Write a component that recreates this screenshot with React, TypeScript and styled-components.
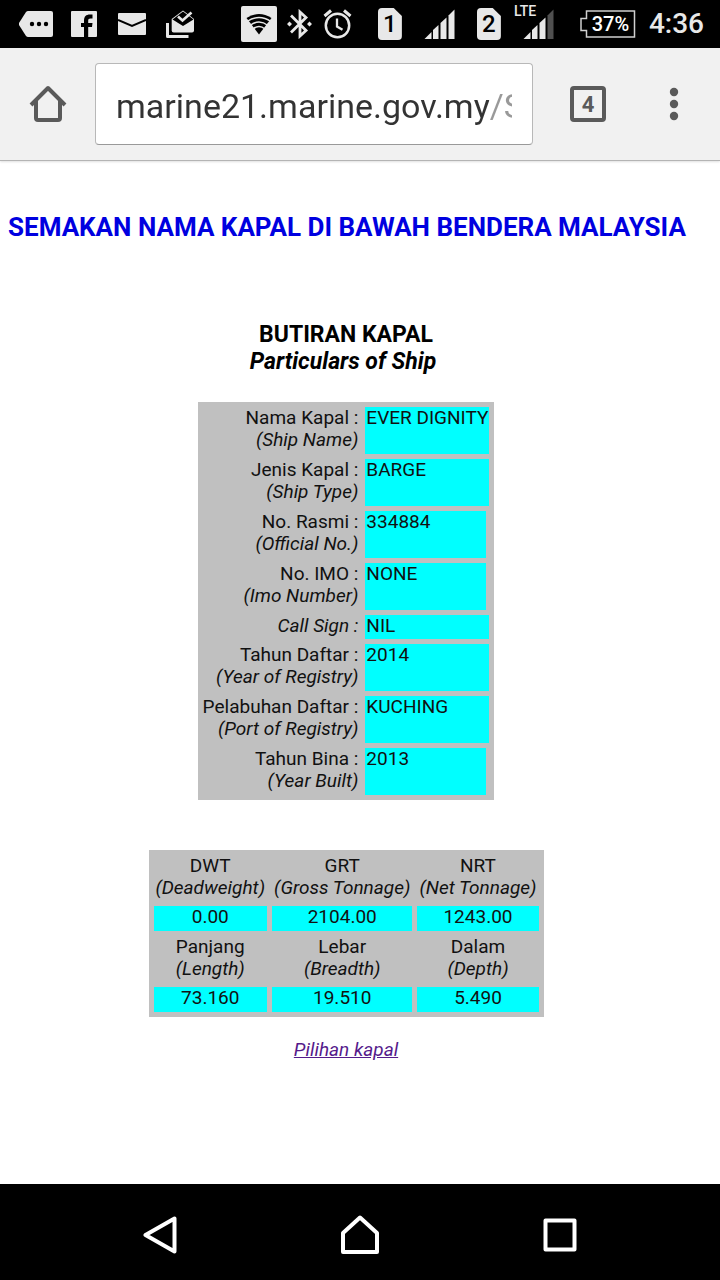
import React from 'react';
import styled, { createGlobalStyle } from 'styled-components';

const GlobalStyle = createGlobalStyle`
  *, *::before, *::after { box-sizing: border-box; }
  body { margin: 0; background: #fff; color: #111; font-family: Roboto, "Liberation Sans", sans-serif; }
  button { border: 0; padding: 0; margin: 0; background: none; font: inherit; cursor: pointer; }
  svg { display: block; flex: none; }
`;

const Screen = styled.div`
  display: flex;
  flex-direction: column;
  min-height: 100vh;
`;

/* ---------- status bar ---------- */

const StatusBar = styled.header`
  display: flex;
  align-items: center;
  justify-content: space-between;
  height: 48px;
  padding: 0 16px 0 12px;
  background: #000;
  color: #e8e8e8;
`;

const Notifications = styled.div`
  display: flex;
`;

const NotificationSlot = styled.span`
  display: flex;
  align-items: center;
  justify-content: center;
  width: 48px;
  height: 48px;
`;

const SystemTray = styled.div`
  display: flex;
  align-items: center;
  gap: 26px;
`;

const TrayGroup = styled.div<{ $gap: number }>`
  display: flex;
  align-items: center;
  gap: ${(p) => p.$gap}px;
`;

const SimBadge = styled.span`
  display: flex;
  align-items: center;
  justify-content: center;
  width: 24px;
  height: 32px;
  border-radius: 4px;
  background: #e8e8e8;
  clip-path: polygon(0 0, 66% 0, 100% 25%, 100% 100%, 0 100%);
  color: #000;
  font-size: 24px;
  font-weight: 500;
  line-height: 34px;
`;

const NetworkSignal = styled.span`
  position: relative;
  display: flex;
  justify-content: flex-end;
  width: 40px;
`;

const NetworkType = styled.span`
  position: absolute;
  top: -6px;
  left: 0;
  font-size: 14px;
  font-weight: 500;
  line-height: 16px;
`;

const Battery = styled.span`
  position: relative;
  display: flex;
  align-items: center;
  justify-content: center;
  width: 56px;
  height: 28px;
  padding-left: 5px;
  color: #fff;
  font-size: 20px;
  font-weight: 500;
`;

const BatteryOutline = styled.svg`
  position: absolute;
  inset: 0;
`;

const Clock = styled.time`
  font-size: 28px;
  font-weight: 500;
  line-height: 32px;
`;

/* ---------- browser toolbar ---------- */

const Toolbar = styled.nav`
  display: flex;
  align-items: center;
  height: 113px;
  padding-right: 15px;
  border-bottom: 1px solid #b4b4b4;
  background: #f1f1f1;
  box-shadow: 0 1px 2px rgba(0, 0, 0, 0.12);
`;

const ToolButton = styled.button<{ $width: number }>`
  display: flex;
  flex: none;
  align-items: center;
  justify-content: center;
  width: ${(p) => p.$width}px;
  height: 96px;
  color: #5a5a5a;
`;

const AddressBox = styled.label`
  display: flex;
  flex: 1;
  align-items: center;
  min-width: 0;
  height: 82px;
  padding: 4px 20px 0;
  border: 1px solid #b8b8b8;
  border-bottom-color: #999;
  border-radius: 4px;
  background: #fff;
`;

const AddressInput = styled.input`
  width: 100%;
  min-width: 0;
  height: 48px;
  padding: 0;
  border: 0;
  outline: 0;
  background: linear-gradient(90deg, #333 373px, #999 373px);
  background-clip: text;
  -webkit-background-clip: text;
  color: transparent;
  font-family: inherit;
  font-size: 34px;
`;

const TabCount = styled.span`
  display: flex;
  align-items: center;
  justify-content: center;
  width: 36px;
  height: 36px;
  border: 4px solid #5a5a5a;
  border-radius: 4px;
  font-size: 22px;
  font-weight: 700;
`;

/* ---------- page ---------- */

const Page = styled.main`
  display: flex;
  flex: 1;
  flex-direction: column;
  align-items: center;
  padding: 50px 36px 40px 8px;
`;

const Title = styled.h1`
  align-self: stretch;
  margin: 0;
  color: #0000e0;
  font-size: 26px;
  font-weight: 700;
  line-height: 32px;
  white-space: nowrap;
`;

const Heading = styled.h2`
  margin: 78px 0 27px;
  color: #000;
  font-size: 23px;
  font-weight: 700;
  line-height: 27px;
  text-align: center;
`;

const Translation = styled.em`
  display: block;
  padding-right: 6px;
`;

const DataTable = styled.table`
  border-collapse: separate;
  border-spacing: 5px;
  background: #c0c0c0;
  font-size: 19px;
  line-height: 22px;
  white-space: nowrap;

  th, td { padding: 0; font-weight: 400; vertical-align: top; }
`;

const ParticularsTable = styled(DataTable)`
  width: 296px;
`;

const TonnageTable = styled(DataTable)`
  width: 395px;
  margin-top: 50px;
  text-align: center;
`;

const RowLabel = styled.div<{ $compact?: boolean }>`
  padding: 0 2px ${(p) => (p.$compact ? 1 : 3)}px 0;
  text-align: right;
`;

const Value = styled.div<{ $compact?: boolean; $narrow?: boolean }>`
  min-width: 121px;
  min-height: ${(p) => (p.$compact ? 24 : 47)}px;
  margin-right: ${(p) => (p.$narrow ? 3 : 0)}px;
  padding: 0 1px;
  background: #00ffff;
`;

const ColumnLabel = styled.div`
  padding: 0 1px 2px;
`;

const Figure = styled.div`
  padding: 0 1px 3px;
  background: #00ffff;
`;

const BackLink = styled.a`
  margin-top: 22px;
  color: #551a8b;
  font-size: 19px;
  font-style: italic;
  line-height: 22px;
  text-decoration: underline;
`;

/* ---------- system navigation ---------- */

const SystemNav = styled.footer`
  display: grid;
  grid-template-columns: repeat(3, 1fr);
  height: 96px;
  padding: 6px 60px 0;
  background: #000;
`;

const NavButton = styled.button`
  display: flex;
  align-items: center;
  justify-content: center;
`;

const light = '#e8e8e8';

const MoreIcon = () => (
  <svg width="34" height="26" viewBox="0 0 34 26" aria-hidden="true">
    <path d="M9 0H32Q34 0 34 2V24Q34 26 32 26H9Q8 26 7 25L0 14V12L7 1Q8 0 9 0Z" fill={light} />
    <g fill="#000"><circle cx="13" cy="13" r="2.2" /><circle cx="20" cy="13" r="2.2" /><circle cx="27" cy="13" r="2.2" /></g>
  </svg>
);

const FacebookIcon = () => (
  <svg width="26" height="26" viewBox="0 0 26 26" aria-hidden="true">
    <rect width="26" height="26" rx="1" fill={light} />
    <path d="M13 26V16H10V12H13V9.500C13 5.500 15 3.500 19 3.500H21.500V7.500H19.500C17.800 7.500 17.200 8.200 17.200 9.600V12H21.500L21 16H17.200V26Z" fill="#000" />
  </svg>
);

const MailIcon = () => (
  <svg width="28" height="22" viewBox="0 0 28 22" aria-hidden="true">
    <rect width="28" height="22" rx="1" fill={light} />
    <path d="M0 7L14 13L28 7" fill="none" stroke="#000" strokeWidth="2" />
  </svg>
);

const InboxIcon = () => (
  <svg width="30" height="28" viewBox="0 0 30 28" aria-hidden="true">
    <path d="M2.500 13V26.500H23.500" fill="none" stroke={light} strokeWidth="3" strokeLinejoin="round" />
    <path d="M6.700 9L18 0.500L29 9V20.500Q29 22.500 27 22.500H8.700Q6.700 22.500 6.700 20.500Z" fill={light} />
    <path d="M7.500 9.500L18 1.500L28.500 9.500L18 16Z" fill="#000" />
    <path d="M13 6.500L17.500 10.500L26.500 2.500" fill="none" stroke={light} strokeWidth="2.600" />
  </svg>
);

const WifiIcon = () => (
  <svg width="36" height="36" viewBox="0 0 36 36" aria-hidden="true">
    <rect width="36" height="36" rx="2" fill={light} />
    <path d="M5.500 12Q18 4 30.500 12L18 28.500Z" fill="#000" />
    <g fill="none" stroke={light} strokeWidth="1.500">
      <path d="M6 15.500Q18 7.500 30 15.500" /><path d="M9 19.500Q18 12.500 27 19.500" /><path d="M12 23Q18 18 24 23" />
    </g>
  </svg>
);

const BluetoothIcon = () => (
  <svg width="26" height="30" viewBox="0 0 26 30" aria-hidden="true">
    <path d="M4 6.500L19 21.500L13 27V3L19 8.500L4 23.500" fill="none" stroke={light} strokeWidth="2.800" />
    <path d="M2.500 12.500L5 15L2.500 17.500L0 15ZM22.500 12.500L25 15L22.500 17.500L20 15Z" fill={light} />
  </svg>
);

const AlarmIcon = () => (
  <svg width="29" height="30" viewBox="0 0 29 30" aria-hidden="true">
    <g fill="none" stroke={light} strokeWidth="2.500">
      <circle cx="14.500" cy="16.500" r="11.700" />
      <path d="M1.500 7L8 1.500M27.500 7L21 1.500" strokeWidth="3" />
      <path d="M14 9.500V17.500L19.500 20.800" strokeWidth="2.300" />
    </g>
  </svg>
);

const SignalIcon = ({ weak = false }: { weak?: boolean }) => (
  <svg width="31" height="30" viewBox="0 0 31 30" aria-hidden="true">
    <g fill={light}>
      <path d="M0.500 30L7.500 23V30Z" /><path d="M9 21L14.500 16V30H9Z" /><path d="M16.500 14L22.500 8.500V30H16.500Z" />
    </g>
    <path d="M24.500 6.500L30.500 0.500V30H24.500Z" fill={weak ? '#505050' : light} />
  </svg>
);

const HomeIcon = () => (
  <svg width="38" height="38" viewBox="0 0 38 38" aria-hidden="true">
    <path d="M2 20L19 3L36 20M7 16V33Q7 35 9 35H29Q31 35 31 33V16" fill="none" stroke="currentColor" strokeWidth="4" strokeLinejoin="round" />
  </svg>
);

const MenuIcon = () => (
  <svg width="10" height="34" viewBox="0 0 10 34" fill="currentColor" aria-hidden="true">
    <circle cx="5" cy="5" r="4.200" /><circle cx="5" cy="17" r="4.200" /><circle cx="5" cy="29" r="4.200" />
  </svg>
);

type Particular = { label: string; translation?: string; value: string; narrow?: boolean };

const particulars: Particular[] = [
  { label: 'Nama Kapal :', translation: '(Ship Name)', value: 'EVER DIGNITY' },
  { label: 'Jenis Kapal :', translation: '(Ship Type)', value: 'BARGE' },
  { label: 'No. Rasmi :', translation: '(Official No.)', value: '334884', narrow: true },
  { label: 'No. IMO :', translation: '(Imo Number)', value: 'NONE', narrow: true },
  { label: 'Call Sign :', value: 'NIL' },
  { label: 'Tahun Daftar :', translation: '(Year of Registry)', value: '2014' },
  { label: 'Pelabuhan Daftar :', translation: '(Port of Registry)', value: 'KUCHING' },
  { label: 'Tahun Bina :', translation: '(Year Built)', value: '2013', narrow: true },
];

const measurements = [
  [
    { label: 'DWT', translation: '(Deadweight)', value: '0.00' },
    { label: 'GRT', translation: '(Gross Tonnage)', value: '2104.00' },
    { label: 'NRT', translation: '(Net Tonnage)', value: '1243.00' },
  ],
  [
    { label: 'Panjang', translation: '(Length)', value: '73.160' },
    { label: 'Lebar', translation: '(Breadth)', value: '19.510' },
    { label: 'Dalam', translation: '(Depth)', value: '5.490' },
  ],
];

export default function App() {
  return (
    <Screen>
      <GlobalStyle />
      <StatusBar>
        <Notifications>
          <NotificationSlot><MoreIcon /></NotificationSlot>
          <NotificationSlot><FacebookIcon /></NotificationSlot>
          <NotificationSlot><MailIcon /></NotificationSlot>
          <NotificationSlot><InboxIcon /></NotificationSlot>
        </Notifications>
        <SystemTray>
          <TrayGroup $gap={10}>
            <WifiIcon />
            <BluetoothIcon />
            <AlarmIcon />
          </TrayGroup>
          <TrayGroup $gap={22}>
            <SimBadge>1</SimBadge>
            <SignalIcon />
            <TrayGroup $gap={13}>
              <SimBadge>2</SimBadge>
              <NetworkSignal>
                <NetworkType>LTE</NetworkType>
                <SignalIcon weak />
              </NetworkSignal>
            </TrayGroup>
          </TrayGroup>
          <TrayGroup $gap={13}>
            <Battery>
              <BatteryOutline width="56" height="28" viewBox="0 0 56 28" aria-hidden="true">
                <path d="M6.500 1H54.500V27H6.500V20.500H1V8.500H6.500Z" fill="none" stroke="#d0d0d0" strokeWidth="1.500" />
              </BatteryOutline>
              37%
            </Battery>
            <Clock>4:36</Clock>
          </TrayGroup>
        </SystemTray>
      </StatusBar>

      <Toolbar aria-label="Browser">
        <ToolButton $width={95} aria-label="Home"><HomeIcon /></ToolButton>
        <AddressBox>
          <AddressInput aria-label="Address" defaultValue="marine21.marine.gov.my/S" />
        </AddressBox>
        <ToolButton $width={110} aria-label="Open tabs"><TabCount>4</TabCount></ToolButton>
        <ToolButton $width={62} aria-label="Menu"><MenuIcon /></ToolButton>
      </Toolbar>

      <Page>
        <Title>SEMAKAN NAMA KAPAL DI BAWAH BENDERA MALAYSIA</Title>
        <Heading>
          BUTIRAN KAPAL
          <Translation>Particulars of Ship</Translation>
        </Heading>

        <ParticularsTable>
          <tbody>
            {particulars.map(({ label, translation, value, narrow }) => (
              <tr key={label}>
                <th scope="row">
                  <RowLabel $compact={!translation}>
                    {translation ? <>{label}<br /><em>{translation}</em></> : <em>{label}</em>}
                  </RowLabel>
                </th>
                <td><Value $compact={!translation} $narrow={narrow}>{value}</Value></td>
              </tr>
            ))}
          </tbody>
        </ParticularsTable>

        <TonnageTable>
          <tbody>
            {measurements.map((group) => (
              <React.Fragment key={group[0].label}>
                <tr>
                  {group.map(({ label, translation }) => (
                    <th key={label} scope="col"><ColumnLabel>{label}<br /><em>{translation}</em></ColumnLabel></th>
                  ))}
                </tr>
                <tr>
                  {group.map(({ label, value }) => (
                    <td key={label}><Figure>{value}</Figure></td>
                  ))}
                </tr>
              </React.Fragment>
            ))}
          </tbody>
        </TonnageTable>

        <BackLink href="#pilihan">Pilihan kapal</BackLink>
      </Page>

      <SystemNav>
        <NavButton aria-label="Back">
          <svg width="34" height="38" viewBox="0 0 34 38" aria-hidden="true">
            <path d="M31.500 2.500V35.500L2.500 19Z" fill="none" stroke="#fff" strokeWidth="4" strokeLinejoin="round" />
          </svg>
        </NavButton>
        <NavButton aria-label="Home screen">
          <svg width="40" height="42" viewBox="0 0 40 42" aria-hidden="true">
            <path d="M20 3.500L37 19V38H3V19Z" fill="none" stroke="#fff" strokeWidth="4" strokeLinejoin="round" />
          </svg>
        </NavButton>
        <NavButton aria-label="Recent apps">
          <svg width="34" height="34" viewBox="0 0 34 34" aria-hidden="true">
            <rect x="2.500" y="2.500" width="29" height="29" fill="none" stroke="#fff" strokeWidth="4" strokeLinejoin="round" />
          </svg>
        </NavButton>
      </SystemNav>
    </Screen>
  );
}
